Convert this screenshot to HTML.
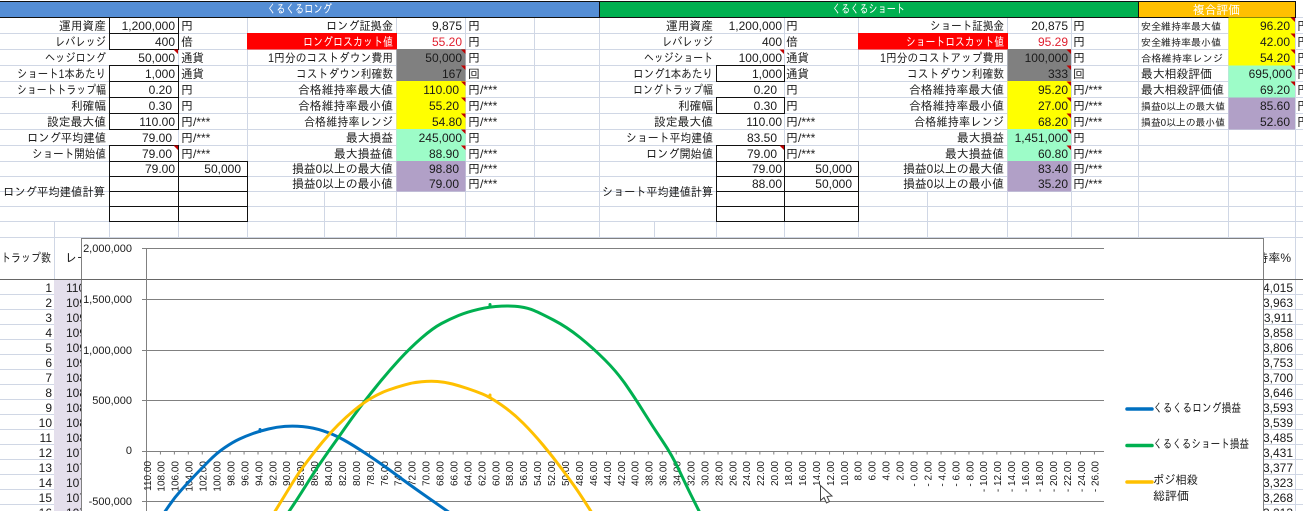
<!DOCTYPE html>
<html lang="ja"><head><meta charset="utf-8"><title>くるくる評価</title>
<style>
html,body{margin:0;padding:0;background:#fff;width:1303px;height:511px;overflow:hidden}
svg{display:block;font-family:"Liberation Sans","IPAGothic","Noto Sans CJK JP",sans-serif;font-size:12px;fill:#1a1a1a}
.e{text-anchor:end}.w{fill:#fff}.r{fill:#e02030}
.x{font-size:10px;text-anchor:end}
</style></head><body>
<svg width="1303" height="511" viewBox="0 0 1303 511" xmlns="http://www.w3.org/2000/svg">
<rect width="1303" height="511" fill="#fff"/>
<!-- gridlines -->
<g stroke="#d0d7e5" stroke-width="1" fill="none">
<path d="M0 33.5H1303M0 49.5H1303M0 65.5H1303M0 81.5H1303M0 97.5H1303M0 113.5H1303M0 129.5H1303M0 145.5H1303M0 161.5H1303M0 176.5H1303M0 191.5H1303M0 206.5H1303M0 221.5H1303M0 237.5H1303M0 17.5H1303"/>
<path d="M54.5 221V511M109.5 221V238M178.5 17V238M247.5 17V238M324.5 191V238M396.5 17V238M465.5 17V238M534.5 17V238M599.5 17V238M654.5 221V238M716.5 221V238M784.5 17V238M858.5 17V238M927.5 191V238M1007.5 17V238M1071.5 17V238M1138.5 17V238M1228.5 17V238M1295.5 17V511"/>
<path d="M0 294.5H82M0 309.5H82M0 324.5H82M0 339.5H82M0 354.5H82M0 369.5H82M0 384.5H82M0 399.5H82M0 414.5H82M0 429.5H82M0 444.5H82M0 459.5H82M0 474.5H82M0 489.5H82M0 504.5H82"/>
<path d="M1263 294.5H1303M1263 309.5H1303M1263 324.5H1303M1263 339.5H1303M1263 354.5H1303M1263 369.5H1303M1263 384.5H1303M1263 399.5H1303M1263 414.5H1303M1263 429.5H1303M1263 444.5H1303M1263 459.5H1303M1263 474.5H1303M1263 489.5H1303M1263 504.5H1303"/>
</g>
<!-- header bands -->
<rect x="0" y="1" width="599.5" height="16.5" fill="#558ed5"/>
<rect x="599.5" y="1" width="539" height="16.5" fill="#00b050"/>
<rect x="1138.5" y="1" width="157" height="16.5" fill="#ffc000"/>
<path d="M0 1.5H1295.5V17.5H0M279 17.5M599.5 1V17M1138.5 1V17" fill="none" stroke="#111"/>
<text class="w" x="267" y="13" textLength="65" lengthAdjust="spacingAndGlyphs">くるくるロング</text>
<text class="w" x="832" y="13" textLength="73" lengthAdjust="spacingAndGlyphs">くるくるショート</text>
<text class="w" x="1193" y="14" textLength="47" lengthAdjust="spacingAndGlyphs">複合評価</text>
<!-- fills -->
<rect x="247" y="33" width="150" height="16.5" fill="#ff0000"/>
<rect x="858" y="33" width="150" height="16.5" fill="#ff0000"/>
<rect x="396.5" y="49" width="69" height="32" fill="#808080"/>
<rect x="396.5" y="81" width="69" height="48" fill="#ffff00"/>
<rect x="396.5" y="129" width="69" height="32" fill="#9dfcc8"/>
<rect x="396.5" y="161" width="69" height="30.5" fill="#b1a0c7"/>
<rect x="1007.5" y="49" width="63.5" height="32" fill="#808080"/>
<rect x="1007.5" y="81" width="63.5" height="48" fill="#ffff00"/>
<rect x="1007.5" y="129" width="63.5" height="32" fill="#9dfcc8"/>
<rect x="1007.5" y="161" width="63.5" height="30.5" fill="#b1a0c7"/>
<rect x="1228.5" y="17.5" width="66.5" height="48" fill="#ffff00"/>
<rect x="1228.5" y="65.5" width="66.5" height="32" fill="#9dfcc8"/>
<rect x="1228.5" y="97.5" width="66.5" height="32" fill="#b1a0c7"/>
<!-- black boxes -->
<g fill="none" stroke="#111">
<path d="M109.5 17.5H178.5V49.5H109.5ZM109.5 33.5H178.5"/>
<path d="M109.5 65.5H178.5V129.5H109.5ZM109.5 81.5H178.5M109.5 97.5H178.5M109.5 113.5H178.5"/>
<path d="M109.5 145.5H178.5V161.5H109.5Z"/>
<path d="M109.5 161.5H247.5V221.5H109.5ZM109.5 176.5H247.5M109.5 191.5H247.5M109.5 206.5H247.5M178.5 161V221"/>
<path d="M716.5 65.5H784.5V81.5H716.5ZM716.5 97.5H784.5V113.5H716.5ZM716.5 145.5H784.5V161.5H716.5Z"/>
<path d="M716.5 161.5H858.5V221.5H716.5ZM716.5 176.5H858.5M716.5 191.5H858.5M716.5 206.5H858.5M784.5 161V221"/>
</g>
<!-- red comment marks -->
<g fill="#c00000">
<path d="M178 49.5v4.5l-4.5-4.5zM784 49.5v4.5l-4.5-4.5zM178 145.5v4.5l-4.5-4.5zM784 145.5v4.5l-4.5-4.5z"/>
<path d="M465.5 49.5v4.5l-4.5-4.5zM465.5 65.5v4.5l-4.5-4.5zM465.5 81.5v4.5l-4.5-4.5zM465.5 97.5v4.5l-4.5-4.5zM465.5 113.5v4.5l-4.5-4.5zM465.5 129.5v4.5l-4.5-4.5zM465.5 145.5v4.5l-4.5-4.5z"/>
<path d="M1071 49.5v4.5l-4.5-4.5zM1071 65.5v4.5l-4.5-4.5zM1071 81.5v4.5l-4.5-4.5zM1071 97.5v4.5l-4.5-4.5zM1071 113.5v4.5l-4.5-4.5zM1071 129.5v4.5l-4.5-4.5zM1071 145.5v4.5l-4.5-4.5z"/>
<path d="M1295 17.5v4.5l-4.5-4.5zM1295 33.5v4.5l-4.5-4.5zM1295 49.5v4.5l-4.5-4.5zM1295 65.5v4.5l-4.5-4.5zM1295 81.5v4.5l-4.5-4.5z"/>
</g>
<!-- labels block 1 -->
<g class="e" style="text-anchor:end">
<text x="106" y="30" textLength="47" lengthAdjust="spacingAndGlyphs">運用資産</text>
<text x="106" y="46" textLength="51" lengthAdjust="spacingAndGlyphs">レバレッジ</text>
<text x="106" y="62" textLength="61" lengthAdjust="spacingAndGlyphs">ヘッジロング</text>
<text x="106" y="78" textLength="89" lengthAdjust="spacingAndGlyphs">ショート1本あたり</text>
<text x="106" y="94" textLength="89" lengthAdjust="spacingAndGlyphs">ショートトラップ幅</text>
<text x="106" y="110" textLength="35" lengthAdjust="spacingAndGlyphs">利確幅</text>
<text x="106" y="126" textLength="59" lengthAdjust="spacingAndGlyphs">設定最大値</text>
<text x="106" y="142" textLength="79" lengthAdjust="spacingAndGlyphs">ロング平均建値</text>
<text x="106" y="158" textLength="74" lengthAdjust="spacingAndGlyphs">ショート開始値</text>
<text x="105" y="196" textLength="102" lengthAdjust="spacingAndGlyphs">ロング平均建値計算</text>
<text x="175" y="30">1,200,000</text><text x="175" y="46">400</text><text x="175" y="62">50,000</text><text x="175" y="78">1,000</text><text x="172" y="94">0.20</text><text x="172" y="110">0.30</text><text x="175" y="126">110.00</text><text x="172" y="142">79.00</text><text x="172" y="158">79.00</text><text x="175" y="173">79.00</text><text x="241" y="173">50,000</text>
<!-- block 2 -->
<text x="393" y="30" textLength="67" lengthAdjust="spacingAndGlyphs">ロング証拠金</text>
<text class="w" x="393" y="46" textLength="90" lengthAdjust="spacingAndGlyphs">ロングロスカット値</text>
<text x="393" y="62" textLength="125" lengthAdjust="spacingAndGlyphs">1円分のコストダウン費用</text>
<text x="393" y="78" textLength="97" lengthAdjust="spacingAndGlyphs">コストダウン利確数</text>
<text x="393" y="94" textLength="95" lengthAdjust="spacingAndGlyphs">合格維持率最大値</text>
<text x="393" y="110" textLength="95" lengthAdjust="spacingAndGlyphs">合格維持率最小値</text>
<text x="393" y="126" textLength="89" lengthAdjust="spacingAndGlyphs">合格維持率レンジ</text>
<text x="393" y="142" textLength="47" lengthAdjust="spacingAndGlyphs">最大損益</text>
<text x="393" y="158" textLength="59" lengthAdjust="spacingAndGlyphs">最大損益値</text>
<text x="393" y="173" textLength="101" lengthAdjust="spacingAndGlyphs">損益0以上の最大値</text>
<text x="393" y="188" textLength="101" lengthAdjust="spacingAndGlyphs">損益0以上の最小値</text>
<text x="462" y="30">9,875</text><text class="r" x="462" y="46">55.20</text><text x="462" y="62">50,000</text><text x="462" y="78">167</text><text x="459" y="94">110.00</text><text x="459" y="110">55.20</text><text x="462" y="126">54.80</text><text x="462" y="142">245,000</text><text x="459" y="158">88.90</text><text x="459" y="173">98.80</text><text x="459" y="188">79.00</text>
<!-- block 3 -->
<text x="713" y="30" textLength="47" lengthAdjust="spacingAndGlyphs">運用資産</text>
<text x="713" y="46" textLength="51" lengthAdjust="spacingAndGlyphs">レバレッジ</text>
<text x="713" y="62" textLength="69" lengthAdjust="spacingAndGlyphs">ヘッジショート</text>
<text x="713" y="78" textLength="80" lengthAdjust="spacingAndGlyphs">ロング1本あたり</text>
<text x="713" y="94" textLength="80" lengthAdjust="spacingAndGlyphs">ロングトラップ幅</text>
<text x="713" y="110" textLength="35" lengthAdjust="spacingAndGlyphs">利確幅</text>
<text x="713" y="126" textLength="59" lengthAdjust="spacingAndGlyphs">設定最大値</text>
<text x="713" y="142" textLength="87" lengthAdjust="spacingAndGlyphs">ショート平均建値</text>
<text x="713" y="158" textLength="67" lengthAdjust="spacingAndGlyphs">ロング開始値</text>
<text x="713" y="196" textLength="111" lengthAdjust="spacingAndGlyphs">ショート平均建値計算</text>
<text x="782" y="30">1,200,000</text><text x="782" y="46">400</text><text x="782" y="62">100,000</text><text x="782" y="78">1,000</text><text x="777" y="94">0.20</text><text x="777" y="110">0.30</text><text x="782" y="126">110.00</text><text x="777" y="142">83.50</text><text x="777" y="158">79.00</text><text x="782" y="173">79.00</text><text x="852" y="173">50,000</text><text x="782" y="188">88.00</text><text x="852" y="188">50,000</text>
<!-- block 4 -->
<text x="1004" y="30" textLength="74" lengthAdjust="spacingAndGlyphs">ショート証拠金</text>
<text class="w" x="1004" y="46" textLength="98" lengthAdjust="spacingAndGlyphs">ショートロスカット値</text>
<text x="1004" y="62" textLength="124" lengthAdjust="spacingAndGlyphs">1円分のコストアップ費用</text>
<text x="1004" y="78" textLength="97" lengthAdjust="spacingAndGlyphs">コストダウン利確数</text>
<text x="1004" y="94" textLength="95" lengthAdjust="spacingAndGlyphs">合格維持率最大値</text>
<text x="1004" y="110" textLength="95" lengthAdjust="spacingAndGlyphs">合格維持率最小値</text>
<text x="1004" y="126" textLength="90" lengthAdjust="spacingAndGlyphs">合格維持率レンジ</text>
<text x="1004" y="142" textLength="47" lengthAdjust="spacingAndGlyphs">最大損益</text>
<text x="1004" y="158" textLength="59" lengthAdjust="spacingAndGlyphs">最大損益値</text>
<text x="1004" y="173" textLength="101" lengthAdjust="spacingAndGlyphs">損益0以上の最大値</text>
<text x="1004" y="188" textLength="101" lengthAdjust="spacingAndGlyphs">損益0以上の最小値</text>
<text x="1068" y="30">20,875</text><text class="r" x="1068" y="46">95.29</text><text x="1068" y="62">100,000</text><text x="1068" y="78">333</text><text x="1068" y="94">95.20</text><text x="1068" y="110">27.00</text><text x="1068" y="126">68.20</text><text x="1068" y="142">1,451,000</text><text x="1068" y="158">60.80</text><text x="1068" y="173">83.40</text><text x="1068" y="188">35.20</text>
<!-- block 5 values -->
<text x="1290" y="30">96.20</text><text x="1290" y="46">42.00</text><text x="1290" y="62">54.20</text><text x="1292" y="78">695,000</text><text x="1290" y="94">69.20</text><text x="1290" y="110">85.60</text><text x="1290" y="126">52.60</text>
</g>
<!-- block 5 labels -->
<g font-size="10">
<text x="1141" y="30" textLength="80" lengthAdjust="spacingAndGlyphs">安全維持率最大値</text>
<text x="1141" y="46" textLength="80" lengthAdjust="spacingAndGlyphs">安全維持率最小値</text>
<text x="1141" y="62" textLength="82" lengthAdjust="spacingAndGlyphs">合格維持率レンジ</text>
<text x="1141" y="110" textLength="84" lengthAdjust="spacingAndGlyphs">損益0以上の最大値</text>
<text x="1141" y="126" textLength="84" lengthAdjust="spacingAndGlyphs">損益0以上の最小値</text>
</g>
<text x="1141" y="78" textLength="71" lengthAdjust="spacingAndGlyphs">最大相殺評価</text>
<text x="1141" y="94" textLength="83" lengthAdjust="spacingAndGlyphs">最大相殺評価値</text>
<!-- units -->
<text x="181" y="30">円</text><text x="181" y="46">倍</text><text x="181" y="62" textLength="23" lengthAdjust="spacingAndGlyphs">通貨</text><text x="181" y="78" textLength="23" lengthAdjust="spacingAndGlyphs">通貨</text><text x="181" y="94">円</text><text x="181" y="110">円</text><text x="181" y="126">円/***</text><text x="181" y="142">円/***</text><text x="181" y="158">円/***</text>
<text x="468" y="30">円</text><text x="468" y="46">円</text><text x="468" y="62">円</text><text x="468" y="78">回</text><text x="468" y="94">円/***</text><text x="468" y="110">円/***</text><text x="468" y="126">円/***</text><text x="468" y="142">円</text><text x="468" y="158">円/***</text><text x="468" y="173">円/***</text><text x="468" y="188">円/***</text>
<text x="786" y="30">円</text><text x="786" y="46">倍</text><text x="786" y="62" textLength="23" lengthAdjust="spacingAndGlyphs">通貨</text><text x="786" y="78" textLength="23" lengthAdjust="spacingAndGlyphs">通貨</text><text x="786" y="94">円</text><text x="786" y="110">円</text><text x="786" y="126">円/***</text><text x="786" y="142">円/***</text><text x="786" y="158">円/***</text>
<text x="1073" y="30">円</text><text x="1073" y="46">円</text><text x="1073" y="62">円</text><text x="1073" y="78">回</text><text x="1073" y="94">円/***</text><text x="1073" y="110">円/***</text><text x="1073" y="126">円/***</text><text x="1073" y="142">円</text><text x="1073" y="158">円/***</text><text x="1073" y="173">円/***</text><text x="1073" y="188">円/***</text>
<text x="1297" y="30">円</text><text x="1297" y="46">円</text><text x="1297" y="62">円</text><text x="1297" y="78">円</text><text x="1297" y="94">円</text><text x="1297" y="110">円</text><text x="1297" y="126">円</text>
<!-- lower sheet -->
<rect x="54" y="280" width="28" height="231" fill="#e4dfec"/>
<text x="1" y="262" textLength="50" lengthAdjust="spacingAndGlyphs">トラップ数</text>
<text x="65" y="262">レート</text>
<text x="1291" y="262" class="e" style="text-anchor:end">維持率%</text>
<g style="text-anchor:end">
<text x="52" y="292">1</text><text x="52" y="307">2</text><text x="52" y="322">3</text><text x="52" y="337">4</text><text x="52" y="352">5</text><text x="52" y="367">6</text><text x="52" y="382">7</text><text x="52" y="397">8</text><text x="52" y="412">9</text><text x="52" y="427">10</text><text x="52" y="442">11</text><text x="52" y="457">12</text><text x="52" y="472">13</text><text x="52" y="487">14</text><text x="52" y="502">15</text><text x="52" y="517">16</text>
</g>
<text x="66" y="292">110.00</text><text x="66" y="307">109.80</text><text x="66" y="322">109.60</text><text x="66" y="337">109.40</text><text x="66" y="352">109.20</text><text x="66" y="367">109.00</text><text x="66" y="382">108.80</text><text x="66" y="397">108.60</text><text x="66" y="412">108.40</text><text x="66" y="427">108.20</text><text x="66" y="442">108.00</text><text x="66" y="457">107.80</text><text x="66" y="472">107.60</text><text x="66" y="487">107.40</text><text x="66" y="502">107.20</text><text x="66" y="517">107.00</text>
<g style="text-anchor:end">
<text x="1293" y="292">4,015</text><text x="1293" y="307">3,963</text><text x="1293" y="322">3,911</text><text x="1293" y="337">3,858</text><text x="1293" y="352">3,806</text><text x="1293" y="367">3,753</text><text x="1293" y="382">3,700</text><text x="1293" y="397">3,646</text><text x="1293" y="412">3,593</text><text x="1293" y="427">3,539</text><text x="1293" y="442">3,485</text><text x="1293" y="457">3,431</text><text x="1293" y="472">3,377</text><text x="1293" y="487">3,323</text><text x="1293" y="502">3,268</text><text x="1293" y="517">3,213</text>
</g>
<!-- chart -->
<rect x="81.5" y="238.5" width="1182" height="290" fill="#fff" stroke="#808080"/>
<path d="M0 279.5H1303" stroke="#666" fill="none"/>
<g stroke="#808080" fill="none">
<path d="M142 248.5H1104M142 299.5H1104M142 350.5H1104M142 400.5H1104M142 451.5H1104M142 501.5H1104M146.5 248V511"/>
<path d="M146 453H1104" stroke-width="3" stroke-dasharray="1 12.94"/>
</g>
<g font-size="11" style="text-anchor:end">
<text x="132" y="252">2,000,000</text><text x="132" y="303">1,500,000</text><text x="132" y="354">1,000,000</text><text x="132" y="404">500,000</text><text x="132" y="454">0</text><text x="132" y="505">-500,000</text>
</g>
<g class="x">
<text transform="translate(150.8 461) rotate(-90)">110.00</text><text transform="translate(164.7 461) rotate(-90)">108.00</text><text transform="translate(178.7 461) rotate(-90)">106.00</text><text transform="translate(192.6 461) rotate(-90)">104.00</text><text transform="translate(206.6 461) rotate(-90)">102.00</text><text transform="translate(220.5 461) rotate(-90)">100.00</text><text transform="translate(234.4 461) rotate(-90)">98.00</text><text transform="translate(248.4 461) rotate(-90)">96.00</text><text transform="translate(262.3 461) rotate(-90)">94.00</text><text transform="translate(276.3 461) rotate(-90)">92.00</text><text transform="translate(290.2 461) rotate(-90)">90.00</text><text transform="translate(304.1 461) rotate(-90)">88.00</text><text transform="translate(318.1 461) rotate(-90)">86.00</text><text transform="translate(332 461) rotate(-90)">84.00</text><text transform="translate(346 461) rotate(-90)">82.00</text><text transform="translate(359.9 461) rotate(-90)">80.00</text><text transform="translate(373.8 461) rotate(-90)">78.00</text><text transform="translate(387.8 461) rotate(-90)">76.00</text><text transform="translate(401.7 461) rotate(-90)">74.00</text><text transform="translate(415.7 461) rotate(-90)">72.00</text><text transform="translate(429.6 461) rotate(-90)">70.00</text><text transform="translate(443.5 461) rotate(-90)">68.00</text><text transform="translate(457.5 461) rotate(-90)">66.00</text><text transform="translate(471.4 461) rotate(-90)">64.00</text><text transform="translate(485.4 461) rotate(-90)">62.00</text><text transform="translate(499.3 461) rotate(-90)">60.00</text><text transform="translate(513.2 461) rotate(-90)">58.00</text><text transform="translate(527.2 461) rotate(-90)">56.00</text><text transform="translate(541.1 461) rotate(-90)">54.00</text><text transform="translate(555.1 461) rotate(-90)">52.00</text><text transform="translate(569 461) rotate(-90)">50.00</text><text transform="translate(582.9 461) rotate(-90)">48.00</text><text transform="translate(596.9 461) rotate(-90)">46.00</text><text transform="translate(610.8 461) rotate(-90)">44.00</text><text transform="translate(624.8 461) rotate(-90)">42.00</text><text transform="translate(638.7 461) rotate(-90)">40.00</text><text transform="translate(652.6 461) rotate(-90)">38.00</text><text transform="translate(666.6 461) rotate(-90)">36.00</text><text transform="translate(680.5 461) rotate(-90)">34.00</text><text transform="translate(694.5 461) rotate(-90)">32.00</text><text transform="translate(708.4 461) rotate(-90)">30.00</text><text transform="translate(722.3 461) rotate(-90)">28.00</text><text transform="translate(736.3 461) rotate(-90)">26.00</text><text transform="translate(750.2 461) rotate(-90)">24.00</text><text transform="translate(764.2 461) rotate(-90)">22.00</text><text transform="translate(778.1 461) rotate(-90)">20.00</text><text transform="translate(792 461) rotate(-90)">18.00</text><text transform="translate(806 461) rotate(-90)">16.00</text><text transform="translate(819.9 461) rotate(-90)">14.00</text><text transform="translate(833.9 461) rotate(-90)">12.00</text><text transform="translate(847.8 461) rotate(-90)">10.00</text><text transform="translate(861.7 461) rotate(-90)">8.00</text><text transform="translate(875.7 461) rotate(-90)">6.00</text><text transform="translate(889.6 461) rotate(-90)">4.00</text><text transform="translate(903.6 461) rotate(-90)">2.00</text><text transform="translate(917.5 461) rotate(-90)">- 0.00</text><text transform="translate(931.4 461) rotate(-90)">- 2.00</text><text transform="translate(945.4 461) rotate(-90)">- 4.00</text><text transform="translate(959.3 461) rotate(-90)">- 6.00</text><text transform="translate(973.3 461) rotate(-90)">- 8.00</text><text transform="translate(987.2 461) rotate(-90)">- 10.00</text><text transform="translate(1001.1 461) rotate(-90)">- 12.00</text><text transform="translate(1015.1 461) rotate(-90)">- 14.00</text><text transform="translate(1029 461) rotate(-90)">- 16.00</text><text transform="translate(1043 461) rotate(-90)">- 18.00</text><text transform="translate(1056.9 461) rotate(-90)">- 20.00</text><text transform="translate(1070.8 461) rotate(-90)">- 22.00</text><text transform="translate(1084.8 461) rotate(-90)">- 24.00</text><text transform="translate(1098.7 461) rotate(-90)">- 26.00</text>
</g>
<!-- curves -->
<g fill="none" stroke-width="3" stroke-linejoin="round" stroke-linecap="round">
<path stroke="#0070c0" d="M164 513L169.5 505Q175 497 180.9 490.5Q186.7 484 193.4 477Q200 470 208.4 461.5Q216.7 453 224.9 447.5Q233 442 239.5 439Q246 436 253 433.5Q260 431 268.4 429Q276.7 427 284.9 426.4Q293 425.7 303 426.6Q313 427.5 323 430.8Q333 434 343 439.5Q353 445 368 455Q383 465 396.5 475Q410 485 420 492Q430 499 450 513M260 429.5v2"/>
<path stroke="#00b050" d="M288 513L294 504Q300 495 309 480.5Q318 466 328 452Q338 438 345 428Q352 418 359.5 408Q367 398 377.5 385Q388 372 399 360Q410 348 421.5 338Q433 328 441.5 323.5Q450 319 458.5 315.5Q467 312 478.5 309.3Q490 306.5 501.5 306.1Q513 305.7 520.5 306.9Q528 308 534 310.5Q540 313 553.5 320Q567 327 580 337.5Q593 348 605 360Q617 372 626 385Q635 398 644 412.5Q653 427 662.5 441Q672 455 679.5 471Q687 487 691 495Q695 503 700 513M490 304.5v2"/>
<path stroke="#ffc000" d="M274 513L283.5 497.5Q293 482 296.5 476.5Q300 471 307.5 461Q315 451 322.5 442Q330 433 338 425Q346 417 354.5 410Q363 403 371.5 398Q380 393 388.5 390Q397 387 405 384.8Q413 382.5 421.5 381.8Q430 381 437.5 381.5Q445 382 452.5 384Q460 386 467.5 388.5Q475 391 482.5 394Q490 397 501.5 405Q513 413 523 423Q533 433 543 445Q553 457 561.5 468.5Q570 480 575 487Q580 494 592 513M490 395v2"/>
</g>
<path d="M1127 409H1152" stroke="#0070c0" stroke-width="3.5" stroke-linecap="round"/>
<path d="M1127 445.5H1152" stroke="#00b050" stroke-width="3.5" stroke-linecap="round"/>
<path d="M1127 482H1152" stroke="#ffc000" stroke-width="3.5" stroke-linecap="round"/>
<text x="1153" y="412" textLength="88" lengthAdjust="spacingAndGlyphs">くるくるロング損益</text>
<text x="1153" y="448" textLength="96" lengthAdjust="spacingAndGlyphs">くるくるショート損益</text>
<text x="1153" y="484" textLength="45" lengthAdjust="spacingAndGlyphs">ポジ相殺</text>
<text x="1153" y="500" textLength="36" lengthAdjust="spacingAndGlyphs">総評価</text>
<!-- mouse cursor -->
<path d="M820.5 485.5V500.5L824 497.5L826.5 503L829.5 501.5L827 496.5L832 496Z" fill="#fff" stroke="#444" stroke-width="1"/>
</svg>
</body></html>
